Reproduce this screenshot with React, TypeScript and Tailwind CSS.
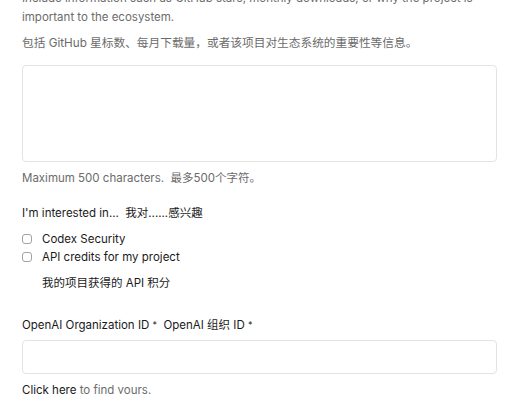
export default function App() {
  return (
    <div
      className="w-[526px] h-[394px] overflow-hidden bg-white"
      style={{ fontFamily: 'Inter, "Noto Sans CJK SC", sans-serif' }}
    >
      <div className="-mt-[11px] px-[22px] w-[497px] box-content">
        <p className="text-[11.5px] leading-[19px] text-[#6b6b6b]">
          Include information such as GitHub stars, monthly downloads, or why the project is
          important to the ecosystem.
        </p>
        <p className="mt-[7px] text-[11.7px] leading-[19px] text-[#6b6b6b]">
          包括 GitHub 星标数、每月下载量，或者该项目对生态系统的重要性等信息。
        </p>
        <textarea className="mt-[12px] block w-[475px] h-[97px] rounded-[4px] border border-[#e3e3e3] resize-none outline-none" />
        <p className="mt-[8px] text-[11.5px] leading-[16px] text-[#6b6b6b]">
          Maximum 500 characters.&nbsp; 最多500个字符。
        </p>
        <p className="mt-[19px] text-[11.5px] leading-[16px] text-[#1a1a1a]">
          I'm interested in...&nbsp; 我对......感兴趣
        </p>
        <div className="mt-[10px] flex flex-col gap-[2px]">
          <label className="flex items-center gap-[10px] text-[11.5px] leading-[16px] text-[#1a1a1a]">
            <span className="w-[10px] h-[10px] rounded-[3px] border border-[#a3a3a3]" />
            Codex Security
          </label>
          <label className="flex items-center gap-[10px] text-[11.5px] leading-[16px] text-[#1a1a1a]">
            <span className="w-[10px] h-[10px] rounded-[3px] border border-[#a3a3a3]" />
            API credits for my project
          </label>
        </div>
        <p className="mt-[10px] pl-[20px] text-[11.5px] leading-[16px] text-[#1a1a1a]">
          我的项目获得的 API 积分
        </p>
        <p className="mt-[26px] text-[11.5px] leading-[16px] text-[#1a1a1a]">
          OpenAI Organization ID <span className="text-[9px] align-top">*</span>&nbsp; OpenAI 组织 ID{" "}
          <span className="text-[9px] align-top">*</span>
        </p>
        <input className="mt-[7px] block w-[475px] h-[34px] rounded-[4px] border border-[#e3e3e3] outline-none" />
        <p className="mt-[8px] text-[11.5px] leading-[16px] text-[#6b6b6b]">
          <span className="text-[#1a1a1a]">Click here</span> to find yours.
        </p>
      </div>
    </div>
  );
}
